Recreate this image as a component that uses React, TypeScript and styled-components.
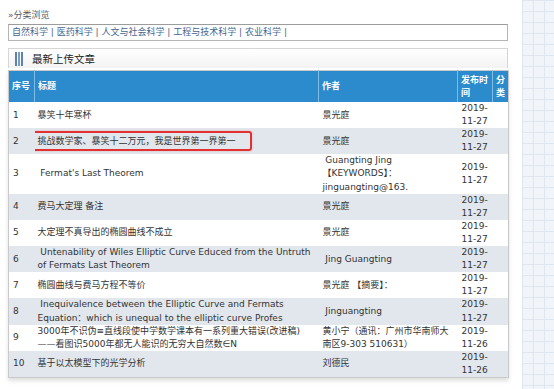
import styled, { createGlobalStyle } from "styled-components";

const GlobalStyle = createGlobalStyle`
  html, body {
    margin: 0;
    padding: 0;
  }
  body {
    font-family: "DejaVu Sans", "Noto Sans CJK SC", sans-serif;
    color: #333;
    background: #fff;
  }
`;

const Page = styled.div`
  display: flex;
  width: 554px;
  height: 389px;
  overflow: hidden;
`;

const Main = styled.div`
  width: 500px;
  padding: 9px 14px 0 8px;
  background: #fff;
`;

const GridPanel = styled.div`
  flex: 1;
  background-color: #f1f5fa;
  background-image: linear-gradient(#dfe6ef 1px, transparent 1px),
    linear-gradient(90deg, #dfe6ef 1px, transparent 1px);
  background-size: 11px 11px;
`;

const Crumb = styled.div`
  font-size: 9px;
  line-height: 12px;
  color: #5a5a5a;
  margin-bottom: 3px;
`;

const CategoryBar = styled.div`
  border: 1px solid #b4b4b4;
  border-top-color: #9c9c9c;
  height: 15px;
  line-height: 15px;
  padding: 0 3px;
  font-size: 9px;
  color: #44668e;
  white-space: nowrap;
  margin-bottom: 7px;
`;

const Heading = styled.div`
  display: flex;
  align-items: center;
  gap: 8px;
  height: 19px;
  border: 1px solid #d6d6d6;
  border-bottom: none;
  background: linear-gradient(#ffffff, #f3f3f3);
  padding-left: 6px;
  font-size: 10.5px;
  color: #222;
  margin-bottom: 2px;
`;

const Table = styled.table`
  width: 500px;
  table-layout: fixed;
  border-collapse: collapse;
  border: 1px solid #c9c9c9;
  box-shadow: 0 3px 4px rgba(0, 0, 0, 0.12);
  font-size: 9px;
`;

const HeadCell = styled.th`
  background: #2b8bcc;
  color: #fff;
  font-weight: bold;
  text-align: left;
  vertical-align: middle;
  height: 31px;
  padding: 0 3px;
  line-height: 13px;
  border-left: 1px solid #80bce4;
  &:first-child {
    border-left: none;
  }
`;

const Row = styled.tr<{ $alt: boolean }>`
  background: ${(p) => (p.$alt ? "#e2e7ed" : "#fff")};
`;

const Cell = styled.td<{ $pad?: number }>`
  padding: 0 ${(p) => p.$pad ?? 4}px;
  line-height: 13.1px;
  vertical-align: middle;
  white-space: nowrap;
  overflow: hidden;
`;

const Highlight = styled.span`
  display: inline-block;
  border: 2px solid #e23131;
  border-radius: 3px;
  padding: 1.5px 14px 1.5px 6px;
  margin-left: -8px;
  box-shadow: 0 0 2px rgba(226, 49, 49, 0.35);
`;

function BarsIcon() {
  return (
    <svg width="9" height="14" viewBox="0 0 9 14">
      <rect x="0" y="0" width="2" height="14" fill="#5d82ad" />
      <rect x="3" y="0" width="2" height="14" fill="#7b9cc2" />
      <rect x="6" y="0" width="2" height="14" fill="#5d82ad" />
    </svg>
  );
}

type Article = {
  title: string[];
  author: string[];
  date: string;
  mark?: boolean;
};

const articles: Article[] = [
  { title: ["暴笑十年寒杯"], author: ["景光庭"], date: "11-27" },
  { title: ["挑战数学家、暴笑十二万元，我是世界第一界第一"], author: ["景光庭"], date: "11-27", mark: true },
  {
    title: ["\u00a0Fermat's Last Theorem"],
    author: ["\u00a0Guangting Jing", "【KEYWORDS】：", "jinguangting@163."],
    date: "11-27",
  },
  { title: ["费马大定理 备注"], author: ["景光庭"], date: "11-27" },
  { title: ["大定理不真导出的椭圆曲线不成立"], author: ["景光庭"], date: "11-27" },
  {
    title: ["\u00a0Untenability of Wiles Elliptic Curve Educed from the Untruth", "of Fermats Last Theorem"],
    author: ["\u00a0Jing Guangting"],
    date: "11-27",
  },
  { title: ["椭圆曲线与费马方程不等价"], author: ["景光庭 【摘要】："], date: "11-27" },
  {
    title: ["\u00a0Inequivalence between the Elliptic Curve and Fermats", "Equation：which is unequal to the elliptic curve Profes"],
    author: ["\u00a0Jinguangting"],
    date: "11-27",
  },
  {
    title: ["3000年不识伪≡直线段使中学数学课本有一系列重大错误(改进稿)", "——看图识5000年都无人能识的无穷大自然数∈N"],
    author: ["黄小宁（通讯：广州市华南师大", "南区9-303 510631）"],
    date: "11-26",
  },
  { title: ["基于以太模型下的光学分析"], author: ["刘德民"], date: "11-26" },
];

const lines = (parts: string[]) =>
  parts.map((p, i) => (
    <span key={i}>
      {i > 0 && <br />}
      {p}
    </span>
  ));

export default function App() {
  return (
    <>
      <GlobalStyle />
      <Page>
        <Main>
          <Crumb>»分类浏览</Crumb>
          <CategoryBar>自然科学 | 医药科学 | 人文与社会科学 | 工程与技术科学 | 农业科学 |</CategoryBar>
          <Heading>
            <BarsIcon />
            最新上传文章
          </Heading>
          <Table>
            <colgroup>
              <col style={{ width: 26 }} />
              <col style={{ width: 284 }} />
              <col style={{ width: 139 }} />
              <col style={{ width: 35 }} />
              <col style={{ width: 16 }} />
            </colgroup>
            <thead>
              <tr>
                <HeadCell>序号</HeadCell>
                <HeadCell>标题</HeadCell>
                <HeadCell>作者</HeadCell>
                <HeadCell>
                  发布时
                  <br />间
                </HeadCell>
                <HeadCell>
                  分<br />类
                </HeadCell>
              </tr>
            </thead>
            <tbody>
              {articles.map((a, i) => (
                <Row key={i} $alt={i % 2 === 1}>
                  <Cell>{i + 1}</Cell>
                  <Cell $pad={3}>{a.mark ? <Highlight>{a.title[0]}</Highlight> : lines(a.title)}</Cell>
                  <Cell>{lines(a.author)}</Cell>
                  <Cell>
                    2019-
                    <br />
                    {a.date}
                  </Cell>
                  <Cell />
                </Row>
              ))}
            </tbody>
          </Table>
        </Main>
        <GridPanel />
      </Page>
    </>
  );
}
